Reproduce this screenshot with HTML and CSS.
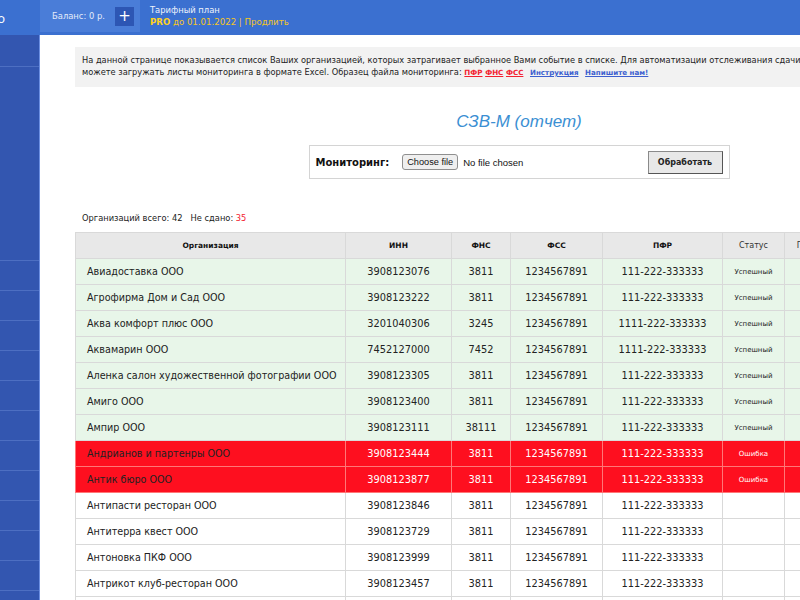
FILE: index.html
```html
<!DOCTYPE html>
<html lang="ru">
<head>
<meta charset="utf-8">
<title>СЗВ-М (отчет)</title>
<link rel="stylesheet" href="styles.css">
</head>
<body>
<div class="app">
  <header class="topbar">
    <div class="logo"><span>Сдача.Про</span></div>
    <div class="balance">
      <span class="balance-text">Баланс: 0 р.</span>
      <span class="plus">+</span>
    </div>
    <div class="tariff">
      <div class="tariff-title">Тарифный план</div>
      <div class="tariff-line"><b>PRO</b> до 01.01.2022 | Продлить</div>
    </div>
  </header>
  <nav class="sidebar">
    <div class="nav-item first"></div>
    <div class="nav-item big"></div>
    <div class="nav-item"></div>
    <div class="nav-item"></div>
    <div class="nav-item"></div>
    <div class="nav-item"></div>
    <div class="nav-item"></div>
    <div class="nav-item"></div>
    <div class="nav-item"></div>
    <div class="nav-item"></div>
    <div class="nav-item"></div>
    <div class="nav-item"></div>
    <div class="nav-item"></div>
    <div class="nav-item"></div>
  </nav>
  <main class="content">
    <div class="info">
      На данной странице показывается список Ваших организацией, которых затрагивает выбранное Вами событие в списке. Для автоматизации отслеживания сдачи отчетности Вы<br>
      можете загружать листы мониторинга в формате Excel. Образец файла мониторинга: <a class="red-link" href="#">ПФР</a> <a class="red-link" href="#">ФНС</a> <a class="red-link" href="#">ФСС</a> <a class="blue-link" href="#">Инструкция</a> <a class="blue-link" href="#">Напишите нам!</a>
    </div>
    <h1 class="title">СЗВ-М (отчет)</h1>
    <form class="monitor">
      <span class="monitor-label">Мониторинг:</span>
      <label class="file-btn">Choose file<input class="file-input" type="file"></label>
      <span class="file-name">No file chosen</span>
      <button class="process" type="button">Обработать</button>
    </form>
    <div class="counts">Организаций всего: 42&nbsp;&nbsp;&nbsp;Не сдано: <span class="red">35</span></div>
    <table class="orgs">
      <colgroup>
        <col style="width:270px"><col style="width:106px"><col style="width:59px"><col style="width:92px"><col style="width:120px"><col style="width:62px"><col style="width:66px">
      </colgroup>
      <thead>
        <tr><th>Организация</th><th>ИНН</th><th>ФНС</th><th>ФСС</th><th>ПФР</th><th class="light">Статус</th><th class="light">Подробно</th></tr>
      </thead>
      <tbody>
        <tr class="ok"><td>Авиадоставка ООО</td><td>3908123076</td><td>3811</td><td>1234567891</td><td>111-222-333333</td><td class="st">Успешный</td><td></td></tr>
        <tr class="ok"><td>Агрофирма Дом и Сад ООО</td><td>3908123222</td><td>3811</td><td>1234567891</td><td>111-222-333333</td><td class="st">Успешный</td><td></td></tr>
        <tr class="ok"><td>Аква комфорт плюс ООО</td><td>3201040306</td><td>3245</td><td>1234567891</td><td>1111-222-333333</td><td class="st">Успешный</td><td></td></tr>
        <tr class="ok"><td>Аквамарин ООО</td><td>7452127000</td><td>7452</td><td>1234567891</td><td>1111-222-333333</td><td class="st">Успешный</td><td></td></tr>
        <tr class="ok"><td>Аленка салон художественной фотографии ООО</td><td>3908123305</td><td>3811</td><td>1234567891</td><td>111-222-333333</td><td class="st">Успешный</td><td></td></tr>
        <tr class="ok"><td>Амиго ООО</td><td>3908123400</td><td>3811</td><td>1234567891</td><td>111-222-333333</td><td class="st">Успешный</td><td></td></tr>
        <tr class="ok"><td>Ампир ООО</td><td>3908123111</td><td>38111</td><td>1234567891</td><td>111-222-333333</td><td class="st">Успешный</td><td></td></tr>
        <tr class="err"><td>Андрианов и партенры ООО</td><td>3908123444</td><td>3811</td><td>1234567891</td><td>111-222-333333</td><td class="st">Ошибка</td><td></td></tr>
        <tr class="err"><td>Антик бюро ООО</td><td>3908123877</td><td>3811</td><td>1234567891</td><td>111-222-333333</td><td class="st">Ошибка</td><td></td></tr>
        <tr><td>Антипасти ресторан ООО</td><td>3908123846</td><td>3811</td><td>1234567891</td><td>111-222-333333</td><td class="st"></td><td></td></tr>
        <tr><td>Антитерра квест ООО</td><td>3908123729</td><td>3811</td><td>1234567891</td><td>111-222-333333</td><td class="st"></td><td></td></tr>
        <tr><td>Антоновка ПКФ ООО</td><td>3908123999</td><td>3811</td><td>1234567891</td><td>111-222-333333</td><td class="st"></td><td></td></tr>
        <tr><td>Антрикот клуб-ресторан ООО</td><td>3908123457</td><td>3811</td><td>1234567891</td><td>111-222-333333</td><td class="st"></td><td></td></tr>
        <tr><td>Арбат ООО</td><td>3908123501</td><td>3811</td><td>1234567891</td><td>111-222-333333</td><td class="st"></td><td></td></tr>
      </tbody>
    </table>
  </main>
</div>
</body>
</html>
```

FILE: styles.css
```css
html, body {
  margin: 0;
  padding: 0;
  overflow: hidden;
  height: 600px;
}
body {
  font-family: "DejaVu Sans", Verdana, sans-serif;
  color: #222;
  background: #fff;
}
.app {
  display: grid;
  grid-template-columns: 40px 958px;
  grid-template-rows: 35px 565px;
  width: 998px;
}
.topbar {
  grid-column: 1 / 3;
  display: flex;
  align-items: flex-start;
  background: #3b70d0;
  color: #fff;
}
.logo {
  width: 40px;
  height: 35px;
  overflow: hidden;
  display: flex;
  justify-content: flex-end;
  align-items: center;
  padding-right: 35px;
  box-sizing: border-box;
  font-family: "Open Sans", sans-serif;
  font-size: 13px;
  white-space: nowrap;
}
.logo span { flex: none; }
.balance {
  width: 100px;
  height: 32px;
  background: #4a7dd8;
  display: flex;
  align-items: center;
  box-sizing: border-box;
  padding-left: 12px;
}
.balance-text {
  font-size: 8.4px;
  color: #e4ecfa;
  flex: 1;
}
.plus {
  width: 19px;
  height: 19px;
  margin-right: 6px;
  background: #2d56b4;
  color: #fff;
  font-size: 15px;
  line-height: 18px;
  text-align: center;
}
.tariff {
  padding: 4px 0 0 10px;
  font-size: 8.4px;
  line-height: 12px;
}
.tariff-title { color: #eef2fb; }
.tariff-line { color: #f5c623; font-size: 8.6px; }
.tariff-line b { color: #ffd21e; }
.sidebar {
  background: #3356b0;
  border-right: 1px solid #6c8fe2;
  box-sizing: border-box;
  display: flex;
  flex-direction: column;
}
.nav-item {
  height: 29px;
  border-bottom: 1px solid #4d6fc2;
  flex: none;
}
.nav-item.first { height: 31px; }
.nav-item.big { height: 193px; }
.content {
  padding: 12px 35px 0;
  min-width: 0;
}
.info {
  background: #f2f2f2;
  padding: 7px 7px 8px;
  font-size: 8.25px;
  line-height: 12px;
  white-space: nowrap;
  overflow: hidden;
  color: #222;
}
.red-link {
  color: #f3222f;
  font-weight: bold;
  font-size: 7.1px;
}
.blue-link {
  color: #3d5fcf;
  font-weight: bold;
  font-size: 7.1px;
  margin-left: 4px;
}
.title {
  margin: 24px 0 13px;
  text-align: center;
  font-family: "Liberation Sans", Arial, sans-serif;
  font-style: italic;
  font-weight: normal;
  font-size: 17px;
  line-height: 21px;
  color: #3b8fd3;
}
.monitor {
  width: 421px;
  height: 34px;
  box-sizing: border-box;
  margin: 0 auto;
  border: 1px solid #d4d4d4;
  display: flex;
  align-items: center;
  padding: 0 6px;
}
.monitor-label {
  font-weight: bold;
  font-size: 10px;
  color: #111;
  margin-right: 13px;
}
.file-btn {
  height: 16px;
  box-sizing: border-box;
  padding: 0 4px;
  border: 1px solid #8f8f8f;
  border-radius: 3px;
  background: #efefef;
  font-family: "Liberation Sans", Arial, sans-serif;
  font-size: 9.2px;
  line-height: 14px;
  color: #111;
  white-space: nowrap;
}
.file-input { display: none; }
.file-name {
  margin-left: 5px;
  font-family: "Liberation Sans", Arial, sans-serif;
  font-size: 9.5px;
  color: #111;
}
.process {
  margin-left: auto;
  width: 75px;
  height: 23px;
  background: #e8e8e8;
  border: 1px solid #8a8a8a;
  border-right-color: #555;
  border-bottom-color: #555;
  font-family: "DejaVu Sans", sans-serif;
  font-weight: bold;
  font-size: 8px;
  color: #222;
  padding: 0;
}
.counts {
  margin-top: 33px;
  padding-left: 7px;
  font-size: 8.3px;
  line-height: 12px;
}
.red { color: #f3222f; }
.orgs {
  margin-top: 8px;
  border-collapse: collapse;
  table-layout: fixed;
  width: 775px;
}
.orgs th, .orgs td {
  border: 1px solid #d9d9d9;
  height: 25px;
  padding: 0;
  text-align: center;
  white-space: nowrap;
  overflow: hidden;
}
.orgs th {
  background: #e8e8e8;
  font-size: 7.5px;
  font-weight: bold;
  color: #111;
}
.orgs th.light {
  font-weight: normal;
  font-size: 8px;
  color: #333;
}
.orgs td {
  font-size: 9.8px;
  color: #222;
}
.orgs td:first-child {
  text-align: left;
  padding-left: 11px;
  font-size: 9.6px;
}
.orgs td.st { font-size: 7px; }
.orgs tr.ok td { background: #e8f6e9; }
.orgs tr.err td {
  background: #fe0f1f;
  color: #fff;
  border-color: #f77;
}
.orgs tr.err td:first-child { color: #222; }
```
